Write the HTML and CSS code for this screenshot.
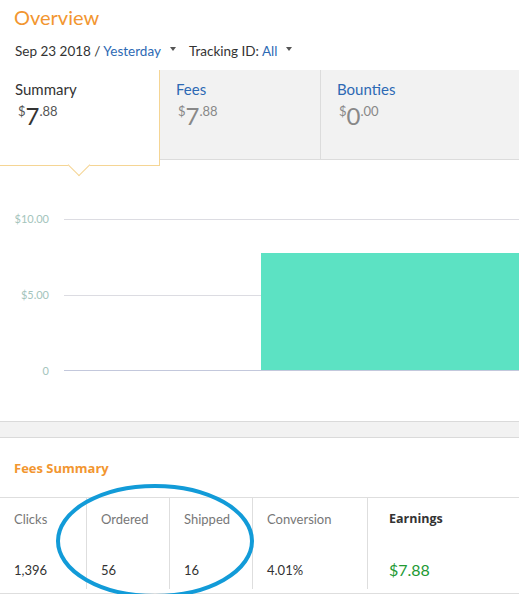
FILE: index.html
```html
<!DOCTYPE html>
<html lang="en">

<head>
    <meta charset="UTF-8">
    <title>Overview</title>
    <link rel="stylesheet" href="styles.css">
</head>

<body>
    <h1 class="title">Overview</h1>

    <div class="filters">
        <span>Sep 23 2018 / <a class="link">Yesterday</a></span>
        <span class="caret"></span>
        <span class="filter-gap">Tracking ID: <a class="link">All</a></span>
        <span class="caret"></span>
    </div>

    <!-- Tabs -->
    <div class="tabs">
        <div class="tab active">
            <div class="tab-name">Summary</div>
            <div class="amount"><sup>$</sup>7<sup>.88</sup></div>
        </div>
        <div class="tab">
            <div class="tab-name">Fees</div>
            <div class="amount"><sup>$</sup>7<sup>.88</sup></div>
        </div>
        <div class="tab last">
            <div class="tab-name">Bounties</div>
            <div class="amount"><sup>$</sup>0<sup>.00</sup></div>
        </div>
    </div>

    <!-- Chart -->
    <div class="chart">
        <div class="axis">
            <span>$10.00</span>
            <span>$5.00</span>
            <span>0</span>
        </div>
        <div class="plot">
            <div class="grid-line top"></div>
            <div class="grid-line mid"></div>
            <div class="grid-line base"></div>
            <div class="bar" style="height: 117px"></div>
        </div>
    </div>

    <div class="band"></div>

    <!-- Fees summary -->
    <h2 class="section-title">Fees Summary</h2>

    <div class="stats">
        <div class="stat w87">
            <div class="stat-label">Clicks</div>
            <div class="stat-value">1,396</div>
        </div>
        <div class="stat w83">
            <div class="stat-label">Ordered</div>
            <div class="stat-value">56</div>
        </div>
        <div class="stat w83">
            <div class="stat-label">Shipped</div>
            <div class="stat-value">16</div>
        </div>
        <div class="stat w115">
            <div class="stat-label">Conversion</div>
            <div class="stat-value">4.01%</div>
        </div>
        <div class="stat last">
            <div class="stat-label strong">Earnings</div>
            <div class="stat-value green">$7.88</div>
        </div>

        <svg class="mark" width="206" height="122" viewBox="0 0 206 122">
            <ellipse cx="103" cy="60" rx="97" ry="55" fill="none" stroke="#129bd8" stroke-width="4" />
        </svg>
    </div>
</body>

</html>
```

FILE: styles.css
```css
body {
    font-family: Lato, "Open Sans", sans-serif;
    font-size: 13px;
    color: #333;
    margin: 0;
    background: #fff;
    width: 519px;
    overflow: hidden;
}

.title {
    font-size: 20px;
    font-weight: normal;
    color: #f29630;
    margin: 0;
    padding: 4px 0 0 14px;
    line-height: 26px;
}

.filters {
    display: flex;
    align-items: center;
    padding: 11px 0 0 15px;
    height: 20px;
    color: #333;
    font-size: 13.5px;
}

.link {
    color: #2d69b4;
}

.caret {
    width: 0;
    height: 0;
    margin-left: 9px;
    border-left: 3.5px solid transparent;
    border-right: 3.5px solid transparent;
    border-top: 4px solid #555;
    position: relative;
    top: -2px;
}

.filter-gap {
    margin-left: 13px;
}

/* tabs */
.tabs {
    display: flex;
    margin-top: 9px;
    height: 90px;
}

.tab {
    width: 161px;
    background: #f2f2f2;
    border-right: 1px solid #dcdcdc;
    border-bottom: 1px solid #dcdcdc;
    padding: 11px 0 0 16px;
    box-sizing: border-box;
}

.tab.last {
    flex: 1;
    border-right: none;
}

.tab-name {
    color: #2d69b4;
    font-size: 15px;
    line-height: 16px;
}

.tab.active .tab-name {
    margin-left: -1px;
}

.amount {
    color: #888;
    font-size: 24px;
    line-height: 26px;
    margin-top: 1px;
    padding-left: 2px;
}

.amount sup {
    font-size: 13px;
    vertical-align: 9px;
}

.tab.active {
    width: 160px;
    height: 96px;
    background: #fff;
    border-right: 1px solid #f5d594;
    border-bottom: 1px solid #f5d594;
    position: relative;
    z-index: 1;
}

.tab.active .tab-name {
    color: #333;
}

.tab.active .amount {
    color: #333;
}

.tab.active .amount sup {
    color: #555;
}

/* the little pointer below the active tab */
.tab.active::after {
    content: "";
    position: absolute;
    left: 71px;
    bottom: -8px;
    width: 15px;
    height: 15px;
    background: #fff;
    border-right: 1px solid #f5d594;
    border-bottom: 1px solid #f5d594;
    transform: rotate(45deg);
}

/* chart */
.chart {
    display: flex;
    margin-top: 59px;
    height: 160px;
}

.axis {
    width: 49px;
    display: flex;
    flex-direction: column;
    justify-content: space-between;
    align-items: flex-end;
    color: #a4c4bc;
    font-size: 11px;
    height: 164px;
    margin-top: -6px;
}

.axis span {
    line-height: 12px;
}

.plot {
    flex: 1;
    margin-left: 15px;
    position: relative;
    height: 152px;
}

.grid-line {
    position: absolute;
    left: 0;
    right: 0;
    height: 1px;
    background: #dcdce2;
}

.grid-line.top {
    top: 0;
}

.grid-line.mid {
    top: 76px;
}

.grid-line.base {
    top: 151px;
    background: #c3c8dc;
}

.bar {
    position: absolute;
    left: 197px;
    right: 0;
    bottom: 1px;
    background: #5ce2c3;
}

.band {
    margin-top: 42px;
    height: 15px;
    background: #f2f2f2;
    border-top: 1px solid #dadada;
    border-bottom: 1px solid #dadada;
}

.section-title {
    font-family: "Open Sans", sans-serif;
    color: #f29630;
    font-size: 13px;
    font-weight: bold;
    margin: 0;
    padding: 22px 0 0 14px;
    line-height: 16px;
}

.stats {
    display: flex;
    margin-top: 21px;
    border-top: 1px solid #dedede;
    border-bottom: 1px solid #dedede;
    height: 95px;
    position: relative;
}

.stat {
    box-sizing: border-box;
    padding: 13px 0 0 14px;
    border-right: 1px solid #dedede;
    margin-bottom: 4px;
}

.stat.w87 {
    width: 87px;
}

.stat.w83 {
    width: 83px;
}

.stat.w115 {
    width: 115px;
}

.stat.last {
    flex: 1;
    border-right: none;
    padding-left: 21px;
}

.stat-label {
    color: #777;
    line-height: 16px;
}

.stat-label.strong {
    font-family: "Open Sans", sans-serif;
    font-size: 12.5px;
    color: #333;
    font-weight: bold;
}

.stat-value {
    margin-top: 35px;
    line-height: 16px;
    color: #333;
}

.stat-value.green {
    color: #229a34;
    font-size: 16px;
}

.mark {
    position: absolute;
    left: 52px;
    top: -17px;
}
```
